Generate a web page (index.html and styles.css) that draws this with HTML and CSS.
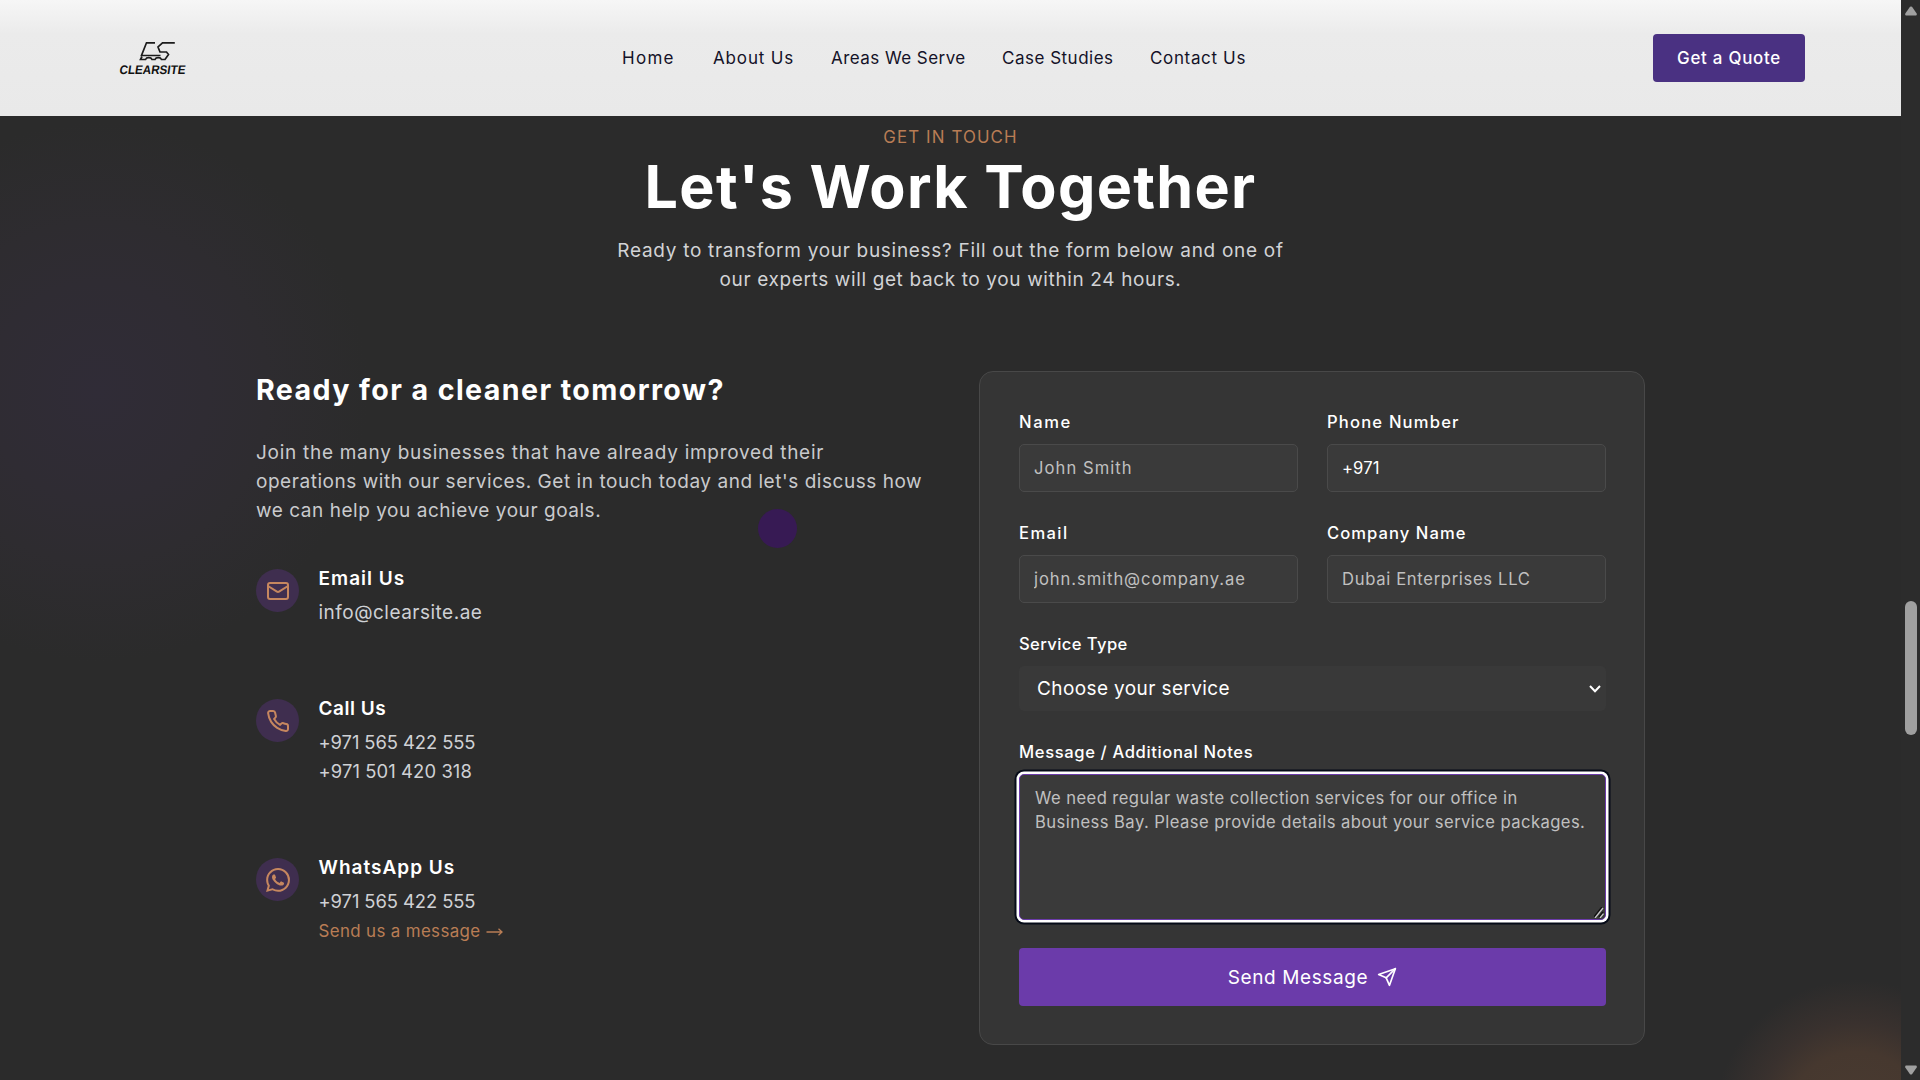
FILE: index.html
```html
<!DOCTYPE html>
<html lang="en">
<head>
<meta charset="utf-8">
<title>ClearSite</title>
<link rel="stylesheet" href="styles.css">
</head>
<body>
<div class="viewport">
  <div class="page">
    <header class="header">
      <a class="logo" href="#">
        <svg viewBox="0 0 70 34" width="70" height="34">
          <g fill="none" stroke="#1c1c1c" stroke-width="1.7">
            <path d="M36 1.800H27.500L22.500 14.500H41.500"/>
            <path d="M55.800 1.800H43.500L39 6L41 11H47.500L49.500 13.500L46 18.500H42.500C41.500 16 37 16 36 18.500H33C32 16 27.500 16 26.500 18.500H21.500L23 15.500"/>
          </g>
          <text class="logo-text" x="0" y="32.800" textLength="66" lengthAdjust="spacingAndGlyphs" transform="skewX(-8) translate(4.600 0)">CLEARSITE</text>
        </svg>
      </a>
      <nav class="nav">
        <a class="nav-home">Home</a><a class="nav-about">About Us</a><a class="nav-areas">Areas We Serve</a><a class="nav-cases">Case Studies</a><a class="nav-contact">Contact Us</a>
      </nav>
      <a class="quote">Get a Quote</a>
    </header>
    <main class="contact">
      <section class="intro">
        <p class="eyebrow">GET IN TOUCH</p>
        <h1>Let's Work Together</h1>
        <p class="lead">Ready to transform your business? Fill out the form below and one of<br><span class="lead-end">our experts will get back to you within 24 hours.</span></p>
      </section>
      <div class="columns">
        <section class="info">
          <h2>Ready for a cleaner tomorrow?</h2>
          <p class="pitch"><span class="pitch-first">Join the many businesses that have already improved their</span><br>operations with our services. Get in touch today and let's discuss how<br>we can help you achieve your goals.</p>
          <div class="channel channel-email">
            <span class="badge"><svg viewBox="0 0 24 24" width="24" height="24"><rect x="2" y="4" width="20" height="16" rx="2"/><path d="m22 7-8.970 5.700a1.940 1.940 0 0 1-2.060 0L2 7"/></svg></span>
            <div><h3>Email Us</h3><p class="mail">info@clearsite.ae</p></div>
          </div>
          <div class="channel channel-call">
            <span class="badge"><svg viewBox="0 0 24 24" width="24" height="24"><path d="M22 16.920v3a2 2 0 0 1-2.180 2 19.790 19.790 0 0 1-8.630-3.070 19.500 19.500 0 0 1-6-6 19.790 19.790 0 0 1-3.070-8.670A2 2 0 0 1 4.110 2h3a2 2 0 0 1 2 1.720 12.840 12.840 0 0 0 .7 2.810 2 2 0 0 1-.45 2.110L8.090 9.910a16 16 0 0 0 6 6l1.270-1.270a2 2 0 0 1 2.110-.45 12.840 12.840 0 0 0 2.810.7A2 2 0 0 1 22 16.920z"/></svg></span>
            <div><h3 class="call-title">Call Us</h3><p>+971 565 422 555</p><p class="second">+971 501 420 318</p></div>
          </div>
          <div class="channel">
            <span class="badge"><svg class="solid" viewBox="0 0 24 24" width="24" height="24"><path d="M17.472 14.382c-.297-.149-1.758-.867-2.030-.967-.273-.099-.471-.148-.67.15-.197.297-.767.966-.94 1.164-.173.199-.347.223-.644.075-.297-.150-1.255-.463-2.390-1.475-.883-.788-1.480-1.761-1.653-2.059-.173-.297-.018-.458.130-.606.134-.133.298-.347.446-.520.149-.174.198-.298.298-.497.099-.198.050-.371-.025-.520-.075-.149-.669-1.612-.916-2.207-.242-.579-.487-.500-.669-.510-.173-.008-.371-.010-.570-.010-.198 0-.520.074-.792.372-.272.297-1.040 1.016-1.040 2.479 0 1.462 1.065 2.875 1.213 3.074.149.198 2.096 3.200 5.077 4.487.709.306 1.262.489 1.694.625.712.227 1.360.195 1.871.118.571-.085 1.758-.719 2.006-1.413.248-.694.248-1.289.173-1.413-.074-.124-.272-.198-.570-.347m-5.421 7.403h-.004a9.870 9.870 0 0 1-5.031-1.378l-.361-.214-3.741.982.998-3.648-.235-.374a9.860 9.860 0 0 1-1.510-5.260c.001-5.450 4.436-9.884 9.888-9.884 2.640 0 5.122 1.030 6.988 2.898a9.825 9.825 0 0 1 2.893 6.994c-.003 5.450-4.437 9.884-9.885 9.884m8.413-18.297A11.815 11.815 0 0 0 12.050 0C5.495 0 .160 5.335.157 11.892c0 2.096.547 4.142 1.588 5.945L.057 24l6.305-1.654a11.882 11.882 0 0 0 5.683 1.448h.005c6.554 0 11.890-5.335 11.893-11.893a11.821 11.821 0 0 0-3.480-8.413z"/></svg></span>
            <div><h3>WhatsApp Us</h3><p>+971 565 422 555</p><a class="chat">Send us a message <svg viewBox="0 0 17 10" width="17" height="10"><path d="M0.500 5H16M12.500 1.800L16 5L12.500 8.200"/></svg></a></div>
          </div>
        </section>
        <form class="card">
          <label class="field"><span class="t-name">Name</span><input class="p-name" placeholder="John Smith"></label>
          <label class="field"><span class="t-phone">Phone Number</span><input class="p-phone" value="+971"></label>
          <label class="field"><span class="t-email">Email</span><input class="p-email" placeholder="john.smith@company.ae"></label>
          <label class="field"><span class="t-company">Company Name</span><input class="p-company" placeholder="Dubai Enterprises LLC"></label>
          <div class="field wide"><span class="t-service">Service Type</span>
            <div class="select">Choose your service<svg viewBox="0 0 12 8" width="12" height="8"><path d="M1 1l5 5.200L11 1"/></svg></div>
          </div>
          <div class="field wide message"><span class="t-message">Message / Additional Notes</span>
            <div class="textarea">We need regular waste collection services for our office in<br>Business Bay. Please provide details about your service packages.
              <svg class="grip" viewBox="0 0 10 11" width="10" height="11"><path class="grip-edge" d="M0 10L8 0M5 10L9 5"/><path class="grip-line" d="M1 11L9 1M6 11L9.500 6.700"/></svg>
            </div>
          </div>
          <button class="send wide" type="button">Send Message<svg viewBox="0 0 24 24" width="20" height="20"><path d="m22 2-7 20-4-9-9-4Z"/><path d="M22 2 11 13"/></svg></button>
        </form>
      </div>
    </main>
    <span class="cursor"></span>
  </div>
  <div class="scrollbar">
    <svg viewBox="0 0 12 10" width="12" height="10"><path d="M5 .8Q6 0 7 .8L11.700 7.500Q12.200 9.500 10.800 9.500H1.200Q-.2 9.500.3 7.500Z"/></svg>
    <span class="thumb"></span>
    <svg class="down" viewBox="0 0 12 10" width="12" height="10"><path d="M5 .8Q6 0 7 .8L11.700 7.500Q12.200 9.500 10.800 9.500H1.200Q-.2 9.500.3 7.500Z"/></svg>
  </div>
</div>
</body>
</html>
```
FILE: styles.css
```css
* { box-sizing: border-box; margin: 0; padding: 0; }
body { background: #2c2c2c; font-family: Inter, "Open Sans", sans-serif; color: #fff; overflow: hidden; }
.viewport { display: flex; width: 1920px; height: 1080px; }
.page {
  position: relative; width: 1901px; height: 1080px; overflow: hidden;
  background:
    radial-gradient(circle at 98px 392px, #302c37 0, #2f2c33 110px, #2e2c30 170px, rgba(44,44,44,0) 270px),
    radial-gradient(circle at 1856px 1122px, #4a3b31 0, #46382f 70px, #39312e 100px, rgba(44,44,44,0) 142px),
    #2b2b2b;
}
.header {
  display: flex; align-items: center; justify-content: space-between;
  height: 116px; padding: 0 96px 0 119px;
  background: linear-gradient(#f6f6f6, #ebebeb 34px, #e9e9e9);
}
.logo { display: flex; width: 70px; margin-right: 433px; }
.logo svg { overflow: visible; }
.logo-text { font: 700 12.500px "Liberation Sans", sans-serif; fill: #111; }
.nav { display: flex; gap: 38px; color: #141228; font-size: 17px; font-weight: 400; white-space: nowrap; }
.nav a { height: 20px; line-height: 20px; }
.nav-home { width: 53px; letter-spacing: 1.300px; }
.nav-about { width: 80px; letter-spacing: .85px; }
.nav-areas { width: 133px; letter-spacing: .45px; }
.nav-cases { width: 110px; letter-spacing: .5px; }
.nav-contact { width: 95px; letter-spacing: .65px; }
.quote {
  width: 152px; height: 48px; line-height: 48px; margin-left: auto; text-align: center; border-radius: 4px;
  background: #4a3182; font-size: 16.900px; font-weight: 500; letter-spacing: .75px;
}
.intro { display: flex; flex-direction: column; align-items: center; padding-top: 9px; text-align: center; white-space: nowrap; }
.eyebrow { font-size: 16.900px; line-height: 24px; letter-spacing: 1.100px; color: #b97d55; }
h1 { height: 72px; margin-top: 2px; font-size: 59.200px; line-height: 72px; letter-spacing: 1.300px; }
.lead { margin-top: 13px; font-size: 19px; line-height: 29px; letter-spacing: .7px; color: #d2d3d6; }
.lead-end { letter-spacing: .63px; }
.columns { display: grid; grid-template-columns: 667px 666px; gap: 56px; margin: 77px 0 0 256px; }
.info { white-space: nowrap; }
h2 { height: 36px; font-size: 28.600px; line-height: 37px; letter-spacing: 1.410px; }
.pitch { margin: 31px 0 44px; font-size: 19px; line-height: 29px; letter-spacing: .540px; color: #c9cacd; }
.pitch-first { letter-spacing: .720px; }
.channel { display: flex; gap: 19.500px; margin-bottom: 43px; font-size: 18.400px; line-height: 29px; letter-spacing: -.08px; color: #cfd1d5; }
.channel-email { height: 87px; }
.channel-call { height: 116px; }
.channel-call .second { letter-spacing: .1px; }
.channel h3 { margin-top: -5px; margin-bottom: 5px; font-size: 19px; font-weight: 600; letter-spacing: 1.010px; color: #fff; }
.channel .call-title { letter-spacing: .53px; }
.channel .mail { font-size: 19px; letter-spacing: .49px; }
.badge { display: grid; place-items: center; width: 43px; height: 43px; border-radius: 50%; background: #3f2e4f; }
.badge svg { fill: none; stroke: #c6875f; stroke-width: 2; stroke-linecap: round; stroke-linejoin: round; }
.badge .solid { fill: #c6875f; stroke: none; }
.chat { font-size: 16.900px; letter-spacing: .36px; color: #b97d55; }
.chat svg { fill: none; stroke: currentColor; stroke-width: 1.300; }
.card {
  display: grid; grid-template-columns: 279px 279px; column-gap: 29px; align-content: start;
  height: 674px; padding: 40px 39px; border: 1px solid #484848; border-radius: 14px; background: #353535;
}
.field { display: flex; flex-direction: column; height: 111px; font-size: 16.600px; font-weight: 550; white-space: nowrap; }
.field > span { height: 20px; line-height: 20px; margin-bottom: 12px; }
.wide { grid-column: 1 / -1; }
.t-name { letter-spacing: 1.600px; }
.t-phone { letter-spacing: 1.180px; }
.t-email { letter-spacing: 1.400px; }
.t-company { letter-spacing: 1.050px; }
.t-service { letter-spacing: .4px; }
.t-message { letter-spacing: .62px; }
input {
  width: 100%; height: 48px; padding: 0 14px; border: 1px solid #4a4a4a; border-radius: 5px; outline: 0;
  background: #3a3a3a; color: #fff; font: 400 16.600px Inter, sans-serif;
}
input::placeholder { color: #c0c0c0; opacity: 1; }
.p-name { letter-spacing: 1.050px; }
.p-phone { letter-spacing: .1px; }
.p-email { letter-spacing: .920px; }
.p-company { letter-spacing: .680px; }
.select {
  display: flex; align-items: center; justify-content: space-between; height: 45px; padding: 0 5px 0 18px;
  border-radius: 5px; background: #393939; font-size: 19px; font-weight: 400; letter-spacing: .390px;
}
.select svg { fill: none; stroke: #fff; stroke-width: 2; }
.message { height: 206px; margin-top: -3px; }
.field.message > span { margin-bottom: 12px; }
.textarea {
  position: relative; height: 146px; padding: 11px 15px; border: 1px solid #6b3baa; border-radius: 5px;
  background: #3a3a3a; box-shadow: 0 0 0 2.500px #fff, 0 0 0 4.500px #060b18;
  font-weight: 400; line-height: 24px; letter-spacing: .440px; color: #c0c0c0;
}
.grip { position: absolute; right: 1px; bottom: 1px; fill: none; }
.grip-edge { stroke: #111; stroke-width: 1.500; }
.grip-line { stroke: #c8c8c8; stroke-width: 1.300; }
.send {
  display: flex; align-items: center; justify-content: center; gap: 9px; height: 58px; border: 0; border-radius: 4px;
  background: #6b3baa; color: #fff; font: 400 19px Inter, sans-serif; letter-spacing: .6px;
}
.send svg { fill: none; stroke: #fff; stroke-width: 2; stroke-linecap: round; stroke-linejoin: round; }
.cursor { position: absolute; left: 758px; top: 509px; width: 39px; height: 39px; border-radius: 50%; background: #371a54; }
.scrollbar { display: flex; flex-direction: column; align-items: center; justify-content: space-between; width: 19px; padding: 6px 0 5px; background: #2c2c2c; fill: #a0a0a0; }
.scrollbar .thumb { width: 12px; height: 134px; margin-top: 254px; border-radius: 6px; background: #a0a0a0; }
.down { transform: rotate(180deg); }
```
